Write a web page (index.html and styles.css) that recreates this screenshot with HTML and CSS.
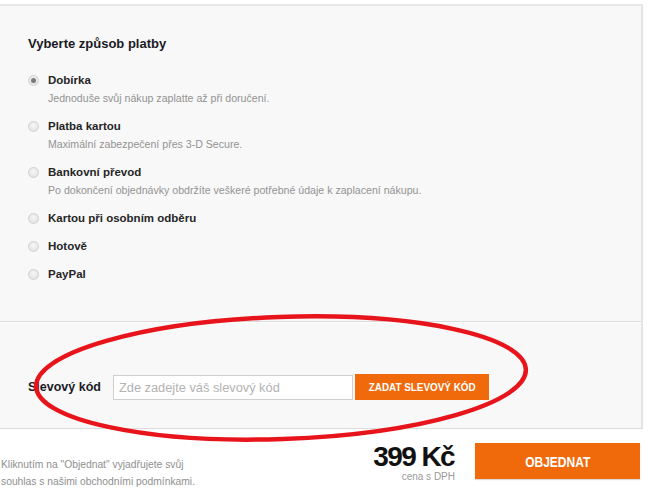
FILE: index.html
```html
<!DOCTYPE html>
<html lang="cs">
<head>
<meta charset="utf-8">
<link rel="stylesheet" href="styles.css">
</head>
<body>
<div class="page">
  <div class="panel">
    <section class="payment">
      <h2 class="title">Vyberte způsob platby</h2>
      <ul class="options">
        <li class="option">
          <span class="radio checked"></span>
          <div class="texts">
            <div class="label">Dobírka</div>
            <div class="desc">Jednoduše svůj nákup zaplatte až při doručení.</div>
          </div>
        </li>
        <li class="option">
          <span class="radio"></span>
          <div class="texts">
            <div class="label">Platba kartou</div>
            <div class="desc">Maximální zabezpečení přes 3-D Secure.</div>
          </div>
        </li>
        <li class="option">
          <span class="radio"></span>
          <div class="texts">
            <div class="label">Bankovní převod</div>
            <div class="desc">Po dokončení objednávky obdržíte veškeré potřebné údaje k zaplacení nákupu.</div>
          </div>
        </li>
        <li class="option">
          <span class="radio"></span>
          <div class="texts"><div class="label">Kartou při osobním odběru</div></div>
        </li>
        <li class="option">
          <span class="radio"></span>
          <div class="texts"><div class="label">Hotově</div></div>
        </li>
        <li class="option">
          <span class="radio"></span>
          <div class="texts"><div class="label">PayPal</div></div>
        </li>
      </ul>
    </section>
    <section class="discount">
      <label class="disc-label">Slevový kód</label>
      <input class="disc-input" type="text" placeholder="Zde zadejte váš slevový kód">
      <button class="disc-btn"><span class="condensed">ZADAT SLEVOVÝ KÓD</span></button>
    </section>
  </div>
  <footer class="footer">
    <p class="terms">Kliknutím na "Objednat" vyjadřujete svůj<br>souhlas s našimi obchodními podmínkami.</p>
    <div class="price">
      <div class="amount">399 Kč</div>
      <div class="vat">cena s DPH</div>
    </div>
    <button class="order-btn"><span class="condensed">OBJEDNAT</span></button>
  </footer>
  <svg class="annotation" width="650" height="491" viewBox="0 0 650 491">
    <ellipse cx="281" cy="378" rx="245" ry="61" transform="rotate(-2 281 378)" fill="none" stroke="#e8141c" stroke-width="4.5"/>
  </svg>
</div>
</body>
</html>
```
FILE: styles.css
```css
* { box-sizing: border-box; }
html, body { margin: 0; padding: 0; background: #fff; }
body {
  font-family: "Liberation Sans", Arial, sans-serif;
  color: #222;
  width: 650px;
  height: 491px;
  overflow: hidden;
}
.page { position: relative; width: 650px; height: 491px; padding-top: 4px; }
.panel {
  width: 643px;
  background: #f8f8f8;
  border-top: 2px solid #e7e7e7;
  border-right: 2px solid #e4e4e4;
  border-bottom: 1px solid #dcdcdc;
}
.payment {
  padding: 30px 0 38px 28px;
  border-bottom: 1px solid #dadada;
}
.title {
  margin: 0;
  font-size: 13px;
  line-height: 16px;
  font-weight: bold;
  color: #1b1b26;
}
.options {
  list-style: none;
  margin: 19px 0 0;
  padding: 0;
  display: flex;
  flex-direction: column;
  gap: 10px;
}
.option { display: flex; align-items: flex-start; gap: 9px; }
.radio {
  width: 11px; height: 11px;
  margin-top: 4px;
  border-radius: 50%;
  border: 1px solid #d2d2d2;
  background: radial-gradient(circle at 50% 40%, #f6f6f6, #dedede);
  flex: none;
  display: flex; align-items: center; justify-content: center;
}
.radio.checked::after {
  content: "";
  width: 5px; height: 5px; border-radius: 50%;
  background: #7a7a7a;
}
.label {
  font-size: 11.5px;
  line-height: 18px;
  color: #262626;
  font-weight: bold;
}
.desc {
  font-size: 10.6px;
  line-height: 18px;
  color: #939393;
}
.discount {
  display: flex;
  align-items: center;
  padding: 51px 0 28px 28px;
  border-top: 1px solid #fff;
}
.disc-label {
  font-size: 12.5px;
  font-weight: bold;
  color: #1b1b26;
  width: 85px;
}
.disc-input {
  width: 240px; height: 25px;
  border: 1px solid #cfcfcf;
  background: #fff;
  font-family: "Liberation Sans", Arial, sans-serif;
  font-size: 12.8px;
  padding: 0 5px;
  color: #333;
  outline: none;
}
.disc-input::placeholder { color: #b3b3b3; }
.disc-btn {
  margin-left: 2px;
  width: 134px; height: 26px;
  border: none;
  background: #f06a0c;
  color: #fff;
  font-family: "Liberation Sans", Arial, sans-serif;
  font-weight: bold;
  font-size: 11.5px;
  padding: 0;
  white-space: nowrap;
}
.condensed {
  display: inline-block;
  transform: scaleX(0.86);
}
.footer {
  display: flex;
  align-items: flex-start;
  padding-top: 14px;
  padding-right: 10px;
}
.terms {
  margin: 13px 0 0 1px;
  font-size: 10.3px;
  line-height: 17px;
  color: #8f8f8f;
  width: 360px;
}
.price {
  margin-left: auto;
  text-align: right;
}
.amount {
  font-size: 28px;
  line-height: 28px;
  font-weight: bold;
  color: #111;
  letter-spacing: -1.6px;
  padding-right: 1px;
}
.vat {
  font-size: 10px;
  line-height: 12px;
  color: #9a9a9a;
}
.order-btn {
  margin-left: 20px;
  width: 165px; height: 36px;
  border: none;
  background: #f06a0c;
  color: #fff;
  font-family: "Liberation Sans", Arial, sans-serif;
  font-weight: bold;
  font-size: 15px;
  box-shadow: 0 1px 1px rgba(0,0,0,0.15);
}
.order-btn .condensed { transform: scaleX(0.8); }
.annotation {
  position: absolute;
  left: 0; top: 0;
  pointer-events: none;
}
```
